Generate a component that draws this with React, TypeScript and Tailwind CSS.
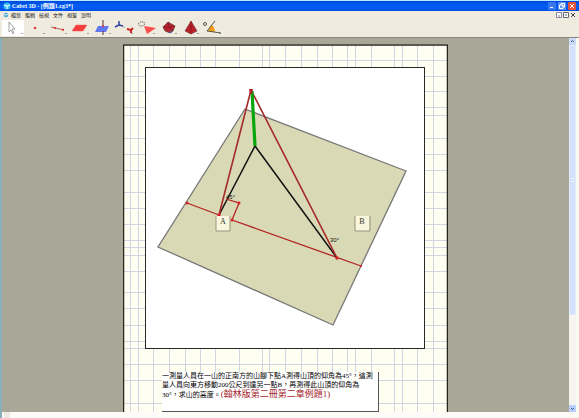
import React from "react";

const menus = ["檔案", "編輯", "檢視", "文件", "視窗", "說明"];

const gridX = [130, 138, 153, 169, 185, 200, 215, 239, 262, 269, 285, 301, 317, 332, 347, 355, 371, 394, 402, 417, 433];
const gridY = [60, 76, 91, 107, 115, 138, 154, 170, 192, 208, 224, 240, 247, 255, 271, 292, 308, 325, 341, 348, 364, 380, 403];

const tools: { name: string; art: React.ReactNode }[] = [
  { name: "操作", art: <path d="M7 2v10l2-2 2 4 1-1-2-4h3z" fill="#fff" stroke="#8a8a8a" strokeWidth=".8" /> },
  { name: "點", art: <circle cx="11" cy="8" r="1.3" fill="#e04040" /> },
  { name: "直線", art: <><path d="M5 7l13 3" stroke="#b06a60" strokeWidth="1.2" /><circle cx="9" cy="7.9" r="1" fill="#d22" /><circle cx="17" cy="9.700" r="1" fill="#d22" /></> },
  { name: "平面", art: <path d="M8 5h11l-4 6H4z" fill="#f53b3b" stroke="#e66" strokeWidth=".5" /> },
  { name: "垂直", art: <><path d="M8 6h11l-3 6H5z" fill="#6477f3" /><path d="M13 0v6M13 11v4" stroke="#533" /><circle cx="13" cy="6" r="1" fill="#d33" /></> },
  { name: "變換", art: <><path d="M7 1v4L3 7M7 5l4 1" stroke="#2f459a" strokeWidth="1.500" fill="none" /><path d="M15 9l4 1v3M19 10l2-2" stroke="#c22" strokeWidth="2" fill="none" /><circle cx="12" cy="7" r=".6" fill="#555" /></> },
  { name: "多邊形", art: <><path d="M10 6l12 2-9 6z" fill="#ff4e4e" /><path d="M4 4l2-2h4l1 2-2 2H6z" fill="none" stroke="#555" strokeDasharray="1.500 .7" strokeWidth=".8" /></> },
  { name: "多面體", art: <><path d="M7 7l5-5 7 4-2 5-3 2-5-2z" fill="#b8222a" stroke="#543" strokeWidth=".7" /><path d="M12 2l1 5 4 4M7 7l6 0 6-1" fill="none" stroke="#713" strokeWidth=".6" /><path d="M13 13l2-3 1 3z" fill="#5363a8" /></> },
  { name: "正多面體", art: <><path d="M13 1l6 10-6 3-6-3z" fill="#b8222a" stroke="#633" strokeWidth=".6" /><path d="M13 1v13" stroke="#711" strokeWidth=".6" /></> },
  { name: "測量", art: <><path d="M11 5l3 2 1 5-7-1z" fill="#f59a13" /><path d="M15 1L7 11l14 2" fill="none" stroke="#554" /><circle cx="5" cy="4" r="1.500" fill="none" stroke="#333" strokeWidth=".8" /></> },
];

function TitleBar() {
  return (
    <header className="flex h-[11px] items-center border-t border-t-[#b9eaff] bg-linear-to-b from-[#0048dc] via-[#0060f5] to-[#0050e8] px-[3px] text-white">
      <svg className="size-[8px]" viewBox="0 0 8 8"><circle cx="4" cy="4" r="3.500" fill="#35bff0" /><path d="M1 3l3 1 3-1M4 4v3" stroke="#fff" fill="none" /></svg>
      <h1 className="ml-px text-[6px] leading-[10px] font-bold [font-family:'Liberation_Serif','Noto_Sans_CJK_TC',serif]">Cabri 3D - [例題1.cg3*]</h1>
      <div className="ml-auto flex gap-[2px]">
        <button aria-label="最小化" className="flex size-[8px] items-end rounded-[1px] bg-[#3978ee] p-[2px]"><span className="h-px w-[3px] bg-white" /></button>
        <button aria-label="還原" className="size-[8px] rounded-[1px] bg-[#5f92f2]"><svg viewBox="0 0 8 8"><path d="M3 3V1.500h3.500V5H5M1.500 3h3.500v3.500H1.500z" fill="none" stroke="#fff" /></svg></button>
        <button aria-label="關閉" className="size-[8px] rounded-[1px] bg-[#e45335]"><svg viewBox="0 0 8 8"><path d="M2 2l4 4M6 2L2 6" stroke="#fff" /></svg></button>
      </div>
    </header>
  );
}

function MenuBar() {
  return (
    <nav className="flex h-[8px] items-center px-[3px] text-[#181818]">
      <svg className="mr-[2px] size-[6px]" viewBox="0 0 8 8"><circle cx="4" cy="4" r="3" fill="#48a6cf" /><path d="M1 3l3 1 3-1" stroke="#fff" fill="none" /></svg>
      <div className="flex gap-[4px]">
        {menus.map((m) => <button key={m} className="text-[5px] leading-[8px]">{m}</button>)}
      </div>
      <div className="ml-auto flex gap-px">
        <button aria-label="最小化文件"><svg className="size-[6px]" viewBox="0 0 6 6"><path d="M.5.5h5v5h-5zM2 4h2" fill="#fff" stroke="#889" /></svg></button>
        <button aria-label="還原文件"><svg className="size-[6px]" viewBox="0 0 6 6"><path d="M.5.5h5v5h-5zM2 3h2" fill="#fff" stroke="#667" /></svg></button>
        <button aria-label="關閉文件"><svg className="size-[6px]" viewBox="0 0 6 6"><path d="M1 1l4 4M5 1L1 5" stroke="#445" /></svg></button>
      </div>
    </nav>
  );
}

function Scene() {
  return (
    <svg className="block w-[325px]" viewBox="123 44 325 368" role="img" aria-label="山高測量立體圖">
      <rect x="123" y="44" width="325" height="368" fill="#fffff1" />
      {gridX.map((x) => <path key={x} d={`M${x}.5 46V412`} stroke="#d3d4e2" />)}
      {gridY.map((y) => <path key={y} d={`M124 ${y}.5H447`} stroke="#d3d4e2" />)}
      <path d="M123.500 412V45H447.500V412" fill="none" stroke="#252520" strokeWidth="1.500" />
      <rect x="145.500" y="67.500" width="279" height="281" fill="#fff" stroke="#292929" />
      <path d="M245 109L406 171 333 325 158 247z" fill="#d9d9b6" stroke="#777" strokeWidth="1.300" />
      <path d="M187 203L219 215M232 220L361 266" stroke="#b22222" strokeWidth="1.300" />
      <path d="M219 215L255 146 337 258" fill="none" stroke="#111" strokeWidth="1.500" />
      <path d="M251 90L219 215M251 90L337 258" stroke="#a52a2a" strokeWidth="1.600" />
      <path d="M252 91L255 146" stroke="#09a50d" strokeWidth="3.200" />
      <path d="M226 199L239 203 232 220" fill="none" stroke="#b52222" strokeWidth="1.300" />
      <g fill="#d91d24"><path d="M249 89h4l-1 5h-2z" fill="#b3202a" /><circle cx="187" cy="203" r="1.500" /><circle cx="219" cy="215" r="1.700" /><circle cx="337" cy="258" r="1.700" /><circle cx="239" cy="203" r="1.500" /><circle cx="232" cy="220" r="1.500" /><circle cx="361" cy="266" r="1" /></g>
      <g fontFamily="Liberation Sans, sans-serif" fontSize="6" fill="#111">
        <text x="226" y="199">45°</text><text x="330" y="242">30°</text>
      </g>
      <g fontFamily="Liberation Serif, serif" fontSize="8" fill="#333" textAnchor="middle">
        <path d="M216 216h14v15h-14zM355 216h14v15h-14z" fill="#f8f6dc" />
        <path d="M216 216v15h14v-15M355 216v15h15v-15" fill="none" stroke="#99947c" />
        <text x="223" y="224">A</text><text x="362" y="224">B</text>
      </g>
    </svg>
  );
}

function ScrollBar() {
  return (
    <aside className="flex w-[10px] flex-col bg-[#fcf9f5] pb-[6px]">
      <button aria-label="向上捲動" className="h-[7px] w-[7px] bg-[#c9d9fb]"><svg viewBox="0 0 7 7"><path d="M2 4l1.500-1.500L5 4" stroke="#456" fill="none" /></svg></button>
      <div className="flex w-[7px] grow flex-col bg-[#f6f4ee]">
        <div className="flex h-3/4 items-center justify-center border border-[#e4ebfb] bg-[#d3e0fc]"><span className="h-[4px] w-[3px] border-y border-[#f3f7ff]" /></div>
      </div>
      <button aria-label="向下捲動" className="h-[7px] w-[7px] bg-[#b9cffc]"><svg viewBox="0 0 7 7"><path d="M2 3l1.500 1.500L5 3" stroke="#35508c" fill="none" /></svg></button>
    </aside>
  );
}

export default function App() {
  return (
    <div className="flex min-h-screen flex-col bg-[#efebdf] [font-family:'Liberation_Sans','Noto_Sans_CJK_TC',sans-serif]">
      <TitleBar />
      <MenuBar />
      <div className="flex h-[18px] items-center px-[2px]" role="toolbar" aria-label="工具">
        {tools.map((t) => (
          <button key={t.name} aria-label={t.name} className="first:bg-white">
            <svg className="h-[16px] w-[22px]" viewBox="0 0 22 16">{t.art}<path d="M19 13h2l-1 1z" fill="#555" /></svg>
          </button>
        ))}
      </div>
      <main className="flex grow border-t border-[#88877d]">
        <section className="flex grow flex-col border-l-2 border-[#8baebb]">
          <div className="flex grow justify-center bg-[#a9a797] pt-[6px]">
            <article className="relative w-[325px]">
              <Scene />
              <p className="absolute bottom-0 left-[39px] h-[40px] w-[217px] border-r border-b border-[#555] bg-white text-[7px] leading-[9px] whitespace-nowrap text-black [font-family:'Liberation_Serif','Noto_Sans_CJK_TC',serif]">
                一測量人員在一山的正南方的山腳下點A測得山頂的仰角為45°，這測<br />
                量人員向東方移動200公尺到達另一點B，再測得此山頂的仰角為<br />
                30°，求山的高度。<span className="text-[9px] text-[#a51e2c]">(翰林版第二冊第二章例題1)</span>
              </p>
            </article>
          </div>
          <div className="h-[6px] bg-[#fdfbf8] pl-[2px]"><div className="h-full w-[6px] bg-[#ebe9e4]" /></div>
        </section>
        <ScrollBar />
      </main>
    </div>
  );
}
